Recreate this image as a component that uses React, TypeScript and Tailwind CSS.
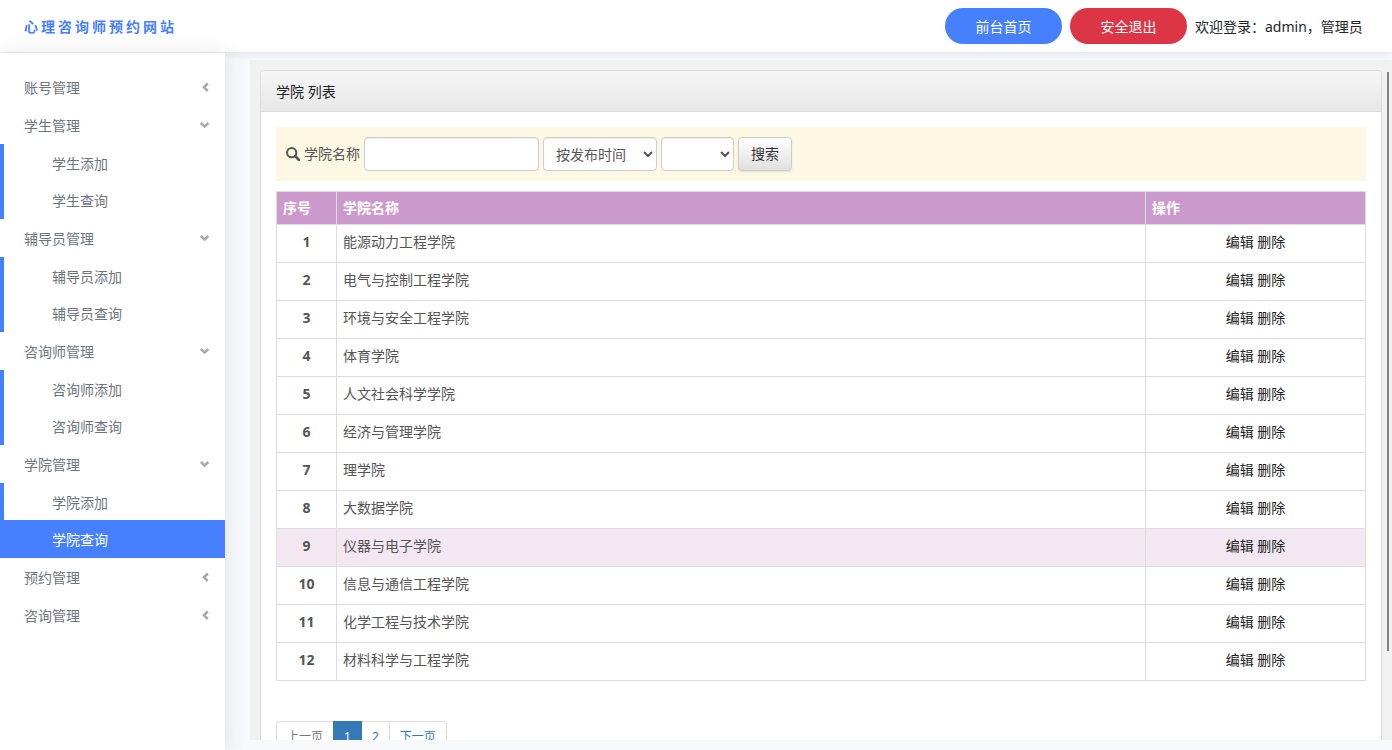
interface MenuGroup {
  title: string;
  children?: string[];
}

const menu: MenuGroup[] = [
  { title: "账号管理" },
  { title: "学生管理", children: ["学生添加", "学生查询"] },
  { title: "辅导员管理", children: ["辅导员添加", "辅导员查询"] },
  { title: "咨询师管理", children: ["咨询师添加", "咨询师查询"] },
  { title: "学院管理", children: ["学院添加", "学院查询"] },
  { title: "预约管理" },
  { title: "咨询管理" },
];

const colleges = [
  "能源动力工程学院",
  "电气与控制工程学院",
  "环境与安全工程学院",
  "体育学院",
  "人文社会科学学院",
  "经济与管理学院",
  "理学院",
  "大数据学院",
  "仪器与电子学院",
  "信息与通信工程学院",
  "化学工程与技术学院",
  "材料科学与工程学院",
];

const activeItem = "学院查询";
const hoveredRow = 8;

function Chevron({ open }: { open: boolean }) {
  return (
    <svg
      viewBox="0 0 10 10"
      className="w-[10px] h-[10px] text-[#a9a9a9]"
      fill="none"
      stroke="currentColor"
      strokeWidth="2.5"
      aria-hidden="true"
    >
      {open ? <path d="M0.8 3 L4.6 6.5 L8.4 3" /> : <path d="M7.8 1.5 L4 5.3 L7.8 9" />}
    </svg>
  );
}

function SearchIcon() {
  return (
    <svg
      viewBox="0 0 14 14"
      className="w-[14px] h-[14px]"
      fill="none"
      stroke="currentColor"
      aria-hidden="true"
    >
      <circle cx="5.7" cy="5.7" r="4.6" strokeWidth="2" />
      <path d="M9.2 9.2 L13 13" strokeWidth="2.6" strokeLinecap="round" />
    </svg>
  );
}

function Header() {
  return (
    <header className="relative z-10 flex items-center justify-between h-[52px] shrink-0 px-6 bg-white shadow-[0_0_10px_1px_rgba(69,75,88,0.14)]">
      <a href="#" className="pt-[2px] text-sm font-bold tracking-[3px] text-[#4680ff]">
        心理咨询师预约网站
      </a>
      <div className="flex items-center gap-2 text-[#212529]">
        <button className="w-[117px] h-9 pt-[2px] rounded-full bg-[#4680ff] text-white">
          前台首页
        </button>
        <button className="w-[117px] h-9 pt-[2px] rounded-full bg-[#dc3545] text-white">
          安全退出
        </button>
        <span className="min-w-[173px] pt-[2px]">欢迎登录：admin，管理员</span>
      </div>
    </header>
  );
}

function Sidebar() {
  return (
    <nav className="relative z-20 w-[225px] shrink-0 mt-px pt-[15px] bg-white text-[#6c757d] shadow-[2px_0_18px_rgba(69,75,88,0.12)]">
      <ul>
        {menu.map((group) => (
          <li key={group.title}>
            <a href="#" className="flex items-center justify-between h-[38px] pl-6 pr-[15px]">
              <span className="pt-[2px]">{group.title}</span>
              <Chevron open={!!group.children} />
            </a>
            {group.children && (
              <ul className="grid grid-rows-[37px_38px]">
                {group.children.map((item) => (
                  <li key={item} className="flex">
                    <a
                      href="#"
                      className={
                        item === activeItem
                          ? "flex items-center flex-1 pt-[2px] pl-12 border-l-4 border-[#4680ff] bg-[#4680ff] text-white"
                          : "flex items-center flex-1 pt-[2px] pl-12 border-l-4 border-[#4680ff]"
                      }
                    >
                      {item}
                    </a>
                  </li>
                ))}
              </ul>
            )}
          </li>
        ))}
      </ul>
    </nav>
  );
}

function SearchForm() {
  return (
    <form
      className="flex items-center gap-1 p-[10px] bg-[#fcf8e3]"
      onSubmit={(e) => e.preventDefault()}
    >
      <label htmlFor="name" className="flex items-center gap-1">
        <SearchIcon />
        学院名称
      </label>
      <input
        id="name"
        type="text"
        className="w-[175px] h-[34px] px-3 rounded border border-[#ccc] bg-white shadow-[inset_0_1px_1px_rgba(0,0,0,0.075)]"
      />
      <select
        aria-label="排序字段"
        className="w-[114px] h-[34px] px-2 rounded border border-[#ccc] bg-white text-[#555] shadow-[inset_0_1px_1px_rgba(0,0,0,0.075)]"
      >
        <option>按发布时间</option>
      </select>
      <select
        aria-label="排序方式"
        className="w-[73px] h-[34px] px-2 rounded border border-[#ccc] bg-white text-[#555] shadow-[inset_0_1px_1px_rgba(0,0,0,0.075)]"
      >
        <option></option>
      </select>
      <button
        type="submit"
        className="w-[54px] h-[34px] rounded border border-[#ccc] bg-linear-to-b from-white to-[#e0e0e0] text-[#333] shadow-[0_1px_2px_rgba(0,0,0,0.1)]"
      >
        搜索
      </button>
    </form>
  );
}

function CollegeTable() {
  return (
    <table className="w-full mt-[10px] table-fixed border-collapse">
      <thead>
        <tr className="h-[33px] bg-[#cc99cc] text-white text-left">
          <th className="w-[60px] px-[6px] border border-[#ddd]">序号</th>
          <th className="px-[6px] border border-[#ddd]">学院名称</th>
          <th className="w-[220px] px-[6px] border border-[#ddd]">操作</th>
        </tr>
      </thead>
      <tbody>
        {colleges.map((name, i) => (
          <tr key={name} className={i === hoveredRow ? "h-[38px] bg-[#f3e8f2]" : "h-[38px]"}>
            <td className="px-[6px] pb-[3px] border border-[#ddd] text-center font-bold">{i + 1}</td>
            <td className="px-[6px] pb-[3px] border border-[#ddd]">{name}</td>
            <td className="px-[6px] pb-[3px] border border-[#ddd] text-center text-[#222]">
              <a href="#">编辑</a> <a href="#">删除</a>
            </td>
          </tr>
        ))}
      </tbody>
    </table>
  );
}

function Pagination() {
  return (
    <ul className="flex mt-10 text-xs text-[#337ab7]">
      <li>
        <span className="flex items-center h-8 px-[10px] border border-r-0 border-[#ddd] rounded-l text-[#777]">
          上一页
        </span>
      </li>
      <li>
        <a href="#" className="flex items-center h-8 px-[10px] border border-[#337ab7] bg-[#337ab7] text-white">
          1
        </a>
      </li>
      <li>
        <a href="#" className="flex items-center h-8 px-[10px] border border-l-0 border-[#ddd]">
          2
        </a>
      </li>
      <li>
        <a href="#" className="flex items-center h-8 px-[10px] border border-l-0 border-[#ddd] rounded-r">
          下一页
        </a>
      </li>
    </ul>
  );
}

export default function App() {
  return (
    <div className="flex flex-col h-screen overflow-hidden bg-[#f7f9fb] text-sm font-['Noto_Sans','Noto_Sans_CJK_SC',sans-serif]">
      <Header />
      <div className="flex flex-1 min-h-0">
        <Sidebar />
        <main className="relative flex-1 min-w-0 mt-2 mb-[10px] ml-[25px] p-[10px] overflow-hidden bg-[#f1f1f1] text-[#555]">
          <section className="rounded border border-[#ddd] bg-white">
            <h1 className="h-[41px] px-[15px] leading-[41px] rounded-t border-b border-[#ddd] bg-linear-to-b from-[#f5f5f5] to-[#e8e8e8] text-[#222]">
              学院 列表
            </h1>
            <div className="p-[15px]">
              <SearchForm />
              <CollegeTable />
              <Pagination />
            </div>
          </section>
          <div className="absolute right-[3px] top-3 bottom-[89px] w-[2px] bg-[#808080]" />
        </main>
      </div>
    </div>
  );
}
